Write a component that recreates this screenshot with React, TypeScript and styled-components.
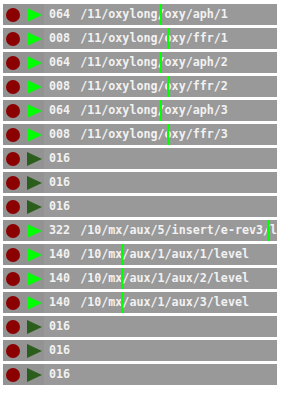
import styled, { createGlobalStyle } from 'styled-components';

const channels = [
  { id: 1, size: '064', path: '/11/oxylong/oxy/aph/1', active: true, meter: 157 },
  { id: 2, size: '008', path: '/11/oxylong/oxy/ffr/1', active: true, meter: 164 },
  { id: 3, size: '064', path: '/11/oxylong/oxy/aph/2', active: true, meter: 157 },
  { id: 4, size: '008', path: '/11/oxylong/oxy/ffr/2', active: true, meter: 164 },
  { id: 5, size: '064', path: '/11/oxylong/oxy/aph/3', active: true, meter: 157 },
  { id: 6, size: '008', path: '/11/oxylong/oxy/ffr/3', active: true, meter: 164 },
  { id: 7, size: '016', path: '', active: false },
  { id: 8, size: '016', path: '', active: false },
  { id: 9, size: '016', path: '', active: false },
  { id: 10, size: '322', path: '/10/mx/aux/5/insert/e-rev3/level', active: true, meter: 264 },
  { id: 11, size: '140', path: '/10/mx/aux/1/aux/1/level', active: true, meter: 118 },
  { id: 12, size: '140', path: '/10/mx/aux/1/aux/2/level', active: true, meter: 118 },
  { id: 13, size: '140', path: '/10/mx/aux/1/aux/3/level', active: true, meter: 118 },
  { id: 14, size: '016', path: '', active: false },
  { id: 15, size: '016', path: '', active: false },
  { id: 16, size: '016', path: '', active: false },
];

export default function App() {
  return (
    <>
      <GlobalStyle />
      <List>
        {channels.map((ch) => (
          <Row key={ch.id}>
            <Controls>
              <RecordDot />
              <PlayIcon $active={ch.active} />
            </Controls>
            <Label>
              <Size>{ch.size}</Size>
              {ch.path && <Path>{ch.path}</Path>}
            </Label>
            {ch.meter !== undefined && <Meter style={{ left: ch.meter }} />}
          </Row>
        ))}
      </List>
    </>
  );
}

const GlobalStyle = createGlobalStyle`
  body {
    margin: 0;
    background: #ffffff;
  }
`;

const List = styled.div`
  display: flex;
  flex-direction: column;
  gap: 3px;
  padding: 4px 0 0 3px;
  width: 274px;
`;

const Row = styled.div`
  position: relative;
  display: flex;
  align-items: center;
  height: 21px;
  background: #999999;
  overflow: hidden;
`;

const Controls = styled.div`
  display: flex;
  align-items: center;
  gap: 7px;
  width: 41px;
  height: 100%;
  padding-left: 3px;
  box-sizing: border-box;
  background: #939393;
  flex-shrink: 0;
`;

const RecordDot = styled.div`
  width: 14px;
  height: 14px;
  border-radius: 50%;
  background: #8b0000;
`;

const PlayIcon = styled.div<{ $active: boolean }>`
  width: 0;
  height: 0;
  border-top: 7px solid transparent;
  border-bottom: 7px solid transparent;
  border-left: 15px solid ${({ $active }) => ($active ? '#00ff00' : '#2b5e1c')};
`;

const Label = styled.div`
  display: flex;
  padding-left: 5px;
  white-space: pre;
  font-family: 'DejaVu Sans Mono', monospace;
  font-weight: 700;
  font-size: 11.7px;
  line-height: 21px;
  color: #f2f2f2;
`;

const Size = styled.span`
  flex-shrink: 0;
`;

const Path = styled.span`
  margin-left: 10px;
  flex-shrink: 0;
`;

const Meter = styled.div`
  position: absolute;
  top: 0;
  bottom: 0;
  width: 2px;
  background: #00ff00;
`;
